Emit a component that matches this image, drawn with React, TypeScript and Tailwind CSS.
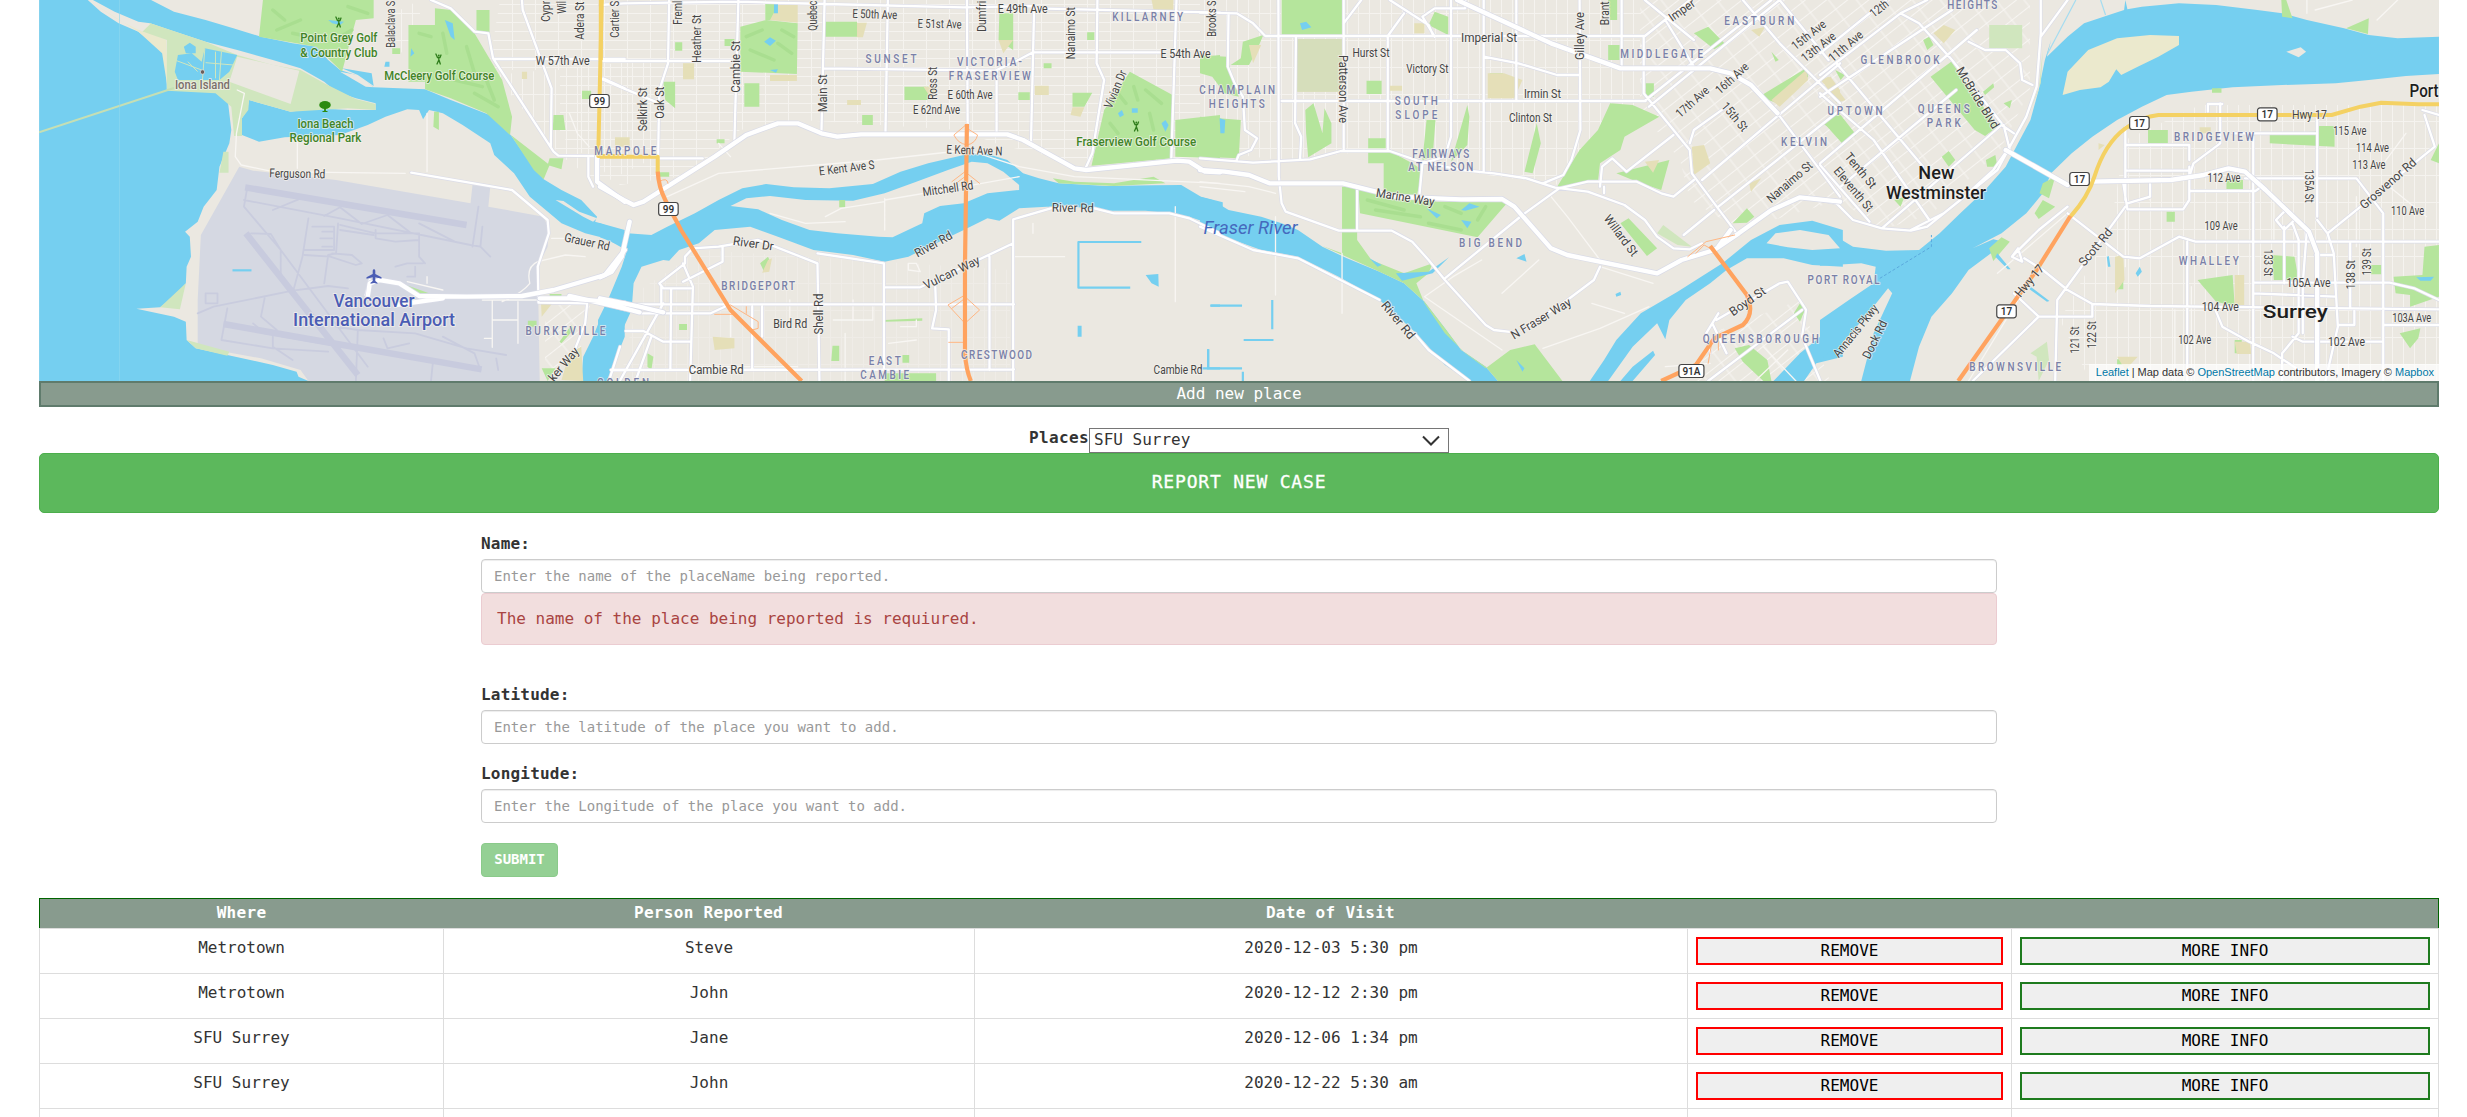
import React from "react";

type Tile = 0 | 1 | 2 | 3;
/* Each map tile has its own origin and horizontal scale; vertical scale is 1/3 everywhere. */
const TILES: [number, number][] = [
  [0, 0.3954],
  [600, 0.3954],
  [1200, 0.40816],
  [1820, 0.41263],
];
const tf = (t: number) => `translate(${TILES[t][0]} 0) scale(${TILES[t][1]} 0.33333)`;

type Shape = [Tile, string];

const WATER: Shape[] = [
  [0, "M99 0H222L255 35 300 70 350 95 400 140 420 175 422 272 470 268 550 272 575 290 585 390 580 430 555 500 548 570 515 620 500 665 468 695 480 710 483 770 472 800 470 850 440 890 405 922 345 926 440 950 470 965 472 1020 495 1045 575 1065 690 1095 750 1115 755 1130 780 1143H99Z"],
  [0, "M382 0L440 35 520 60 590 85 660 110 740 130 800 140 830 180 860 210 900 225 945 262 1075 268 1140 300 1250 350 1295 410 1330 470 1375 538 1420 570 1470 600 1510 650 1505 665 1580 690V748L1530 715 1480 700 1420 670 1390 640 1340 590 1300 520 1250 465 1240 430 1170 375 1120 340 1085 330 1070 358 1060 330 1030 328 975 350 930 375 860 405 720 412 655 425 612 405V355L625 330 630 300 690 320 735 335 800 325 880 330 950 330V310L900 295 850 275 820 245 760 205 690 180 600 150 520 125 430 90 380 70 350 65 290 35 235 0Z"],
  [0, "M1580 800L1530 920 1500 1010 1475 1070 1470 1143H1535L1580 1010Z"],
  [1, "M0 670L70 700 130 705 170 680 240 640 300 600 360 565 420 552 490 562 580 565 690 552 760 515 830 490 920 465 980 462 1030 480 1070 520 1110 535 1160 550 1280 558 1400 556 1470 555 1520 590 1575 607V684L1490 650 1440 640 1380 632 1280 632 1200 620 1130 620 1060 625 1010 662 980 655 920 690 850 730 780 770 720 785 640 765 540 750 450 710 380 680 290 690 250 730 200 750 175 782 160 780 105 800 85 850 80 930 45 1020 15 1143H-5V960L20 900 55 800 70 745 0 712Z"],
  [2, "M0 590L30 600 70 630 150 650 200 670 240 690 300 740 360 775 440 815 500 850 550 905 600 985 640 1050 700 1100 730 1143H660L600 1095 530 1000 440 900 340 830 240 770 150 750 70 715 0 670Z"],
  [2, "M955 1143L990 1080 1020 1020 1080 940 1170 875 1280 790 1350 720 1420 675 1500 662 1575 690V800L1500 795 1430 775 1340 775 1290 810 1250 850 1190 900 1150 960 1140 1018 1120 970 1060 1040 1000 1143ZM1030 1143L1060 1100 1110 1052 1115 1065 1060 1143ZM1405 1143L1470 1060 1540 990 1575 965V1070L1510 1090 1480 1143Z"],
  [3, "M0 675L40 710 80 740 160 752 240 750 290 700 340 640 400 570 450 500 480 430 510 360 530 270 545 180 560 120 550 170 600 110 640 70 700 45 737 30 740 0 745 28 780 20 870 10 960 15 1060 30 1120 40 1180 60 1270 85 1330 105 1400 115 1500 110V222L1420 228 1330 240 1250 250 1120 255 1000 262 900 275 840 285 780 320 720 360 660 410 610 460 560 520 540 580 500 640 440 700 370 745 420 718 435 722 425 750 360 810 320 880 270 950 240 1040 218 1143H100L130 1000 175 880 165 865 110 950 60 1020 0 1080V960L70 900 130 850 135 800 100 790 0 797Z"],
];
const ISLANDS: Shape[] = [
  [1, "M330 618L370 595 430 588 520 600 640 602 720 580 800 545 880 510 940 485 980 490 1020 515 1060 555 1060 570 980 580 920 610 860 618 820 640 815 670 740 712 705 710 600 700 530 690 460 660 400 628Z"],
  [2, "M1388 730L1410 700 1470 690 1540 705 1568 745 1500 750 1440 742Z"],
  [0, "M1405 600L1425 603 1465 635 1510 655 1500 665 1475 650Z"],
  [0, "M860 215L905 225 945 262 925 260Z"],
  [3, "M1130 155L1165 142 1178 155 1160 172Z"],
];
const SAND: Shape[] = [
  [3, "M588 285L600 215 650 150 720 115 800 105 870 108 870 135 820 170 770 200 730 225 718 208 700 245 680 262 630 270Z"],
  [0, "M222 0L300 60 420 120 425 272 410 160 350 95Z"],
];
const PALE_GREEN: Shape[] = [
  [0, "M350 90L380 70 520 125 600 165 690 195 760 210 820 250 900 297 950 312V330L880 325 735 335 630 300 628 330 612 355V408H592L585 320 545 280 422 272V120Z"],
  [0, "M565 455H578V518H555ZM470 850L455 928 405 922ZM472 1020L580 1055 575 1067 495 1045Z"],
  [2, "M1135 675L1205 740 1170 735 1120 700Z"],
  [3, "M410 75H490V145H410ZM510 1060L550 1025 555 1080 530 1143 525 1070ZM530 270L540 150 535 250 480 420Z"],
];
const GREEN: Shape[] = [
  [0, "M665 0H945V55L900 60 865 215 800 140 655 110ZM1100 25L1140 30 1200 100 1270 240 1295 350 1290 405 1230 340 1140 295 1075 268V245H1033V75H1100ZM1205 30H1238V100H1205ZM1292 405L1390 495 1375 538 1350 510ZM1400 345H1425L1430 390H1398ZM1390 475L1425 475 1420 508 1385 495ZM1098 335H1110V390L1096 380ZM1472 272H1495V297H1472ZM1390 882H1420V903H1390ZM1335 962H1357V980H1335ZM1415 1025L1445 975 1450 990 1420 1030ZM1370 1105H1405L1385 1143ZM1015 850L1085 880 1050 880ZM992 145H1012V162H992Z"],
  [1, "M355 80L420 60 500 70 498 222 355 215ZM570 65H650V110H570ZM365 250H403V320H365ZM160 245H190V325L165 300ZM1010 40H1045V150L1008 120ZM1340 215L1448 285 1445 475 1243 497 1275 330ZM1455 360L1568 345V475L1455 470ZM770 260H830V300H770ZM1195 278H1245L1225 320H1195ZM663 345H690V375H663ZM1058 277H1087V300H1058ZM315 117H340V138H315ZM295 418H315V430H295ZM150 517H175V530H150ZM720 960L815 955V962L720 965ZM588 1037H605V1083H585ZM720 1120H850V1143H720ZM765 1065H782V1088H765ZM1525 170L1568 165V225L1520 215ZM1145 535L1200 545 1300 550 1400 530 1430 550 1300 558 1160 550ZM418 10H450V60H418ZM120 1060L135 1070 130 1110 120 1100ZM405 790L425 770 432 790 415 815ZM605 600H620V622H605ZM200 972H220V990H200ZM190 127H208V152H190ZM1232 97H1250V120H1232ZM1122 190H1142V205H1122Z"],
  [2, "M200 0H348V107H200ZM0 350L100 360 95 475 0 470ZM0 165L65 170 95 290 60 280 30 230 0 220ZM105 125L155 105 140 150 120 195 75 195 100 175ZM408 242H445V282H408ZM258 330L278 310 300 400 305 325 322 370 322 430 265 472 260 400ZM555 360H577L570 470 545 480ZM615 485L655 315 660 350 655 435ZM795 515L825 370 835 430 815 520ZM412 415H455V445H412ZM412 450H460L520 490 545 510 530 595 450 575V490H412ZM388 570L440 575 580 605 755 605 680 712 392 640ZM348 560H385V720L420 780 500 820 570 790 560 820 530 850 550 910 600 1000 650 1060 700 1105 760 1050 820 1033 888 1143H730L700 1100 640 1050 600 985 550 905 500 850 440 815 300 738 348 760ZM875 560L930 450 975 390 1005 310 1060 315 1125 350 1040 410 1030 450 980 490 975 545ZM1020 520L1150 480 1130 570 1070 545ZM1030 670L1050 655 1120 745 1095 768ZM1305 670L1340 625 1358 650 1340 668ZM1210 100L1245 80 1285 130 1260 148ZM1310 1045L1345 1035 1390 1080 1400 1143H1380L1330 1085ZM1525 370L1568 330V405ZM560 75L575 35 608 50V105ZM1000 135H1028V180H1000ZM1092 250H1112V290H1092ZM1000 0H1022V60H1005ZM1370 290L1485 205 1490 230 1415 310ZM1470 910L1482 930 1470 965 1455 940ZM1400 155L1418 180 1410 185ZM710 220H742V240H710Z"],
  [3, "M268 230L318 185 430 380 400 408 375 390ZM10 370L50 345 88 405 55 432ZM410 745L440 712 460 725 420 783ZM520 640L540 600 570 620 530 657ZM540 550L570 530 555 595 532 580ZM795 390H843V430H795ZM1090 400L1200 395 1210 378H1247V440L1090 430ZM915 840L1000 825 1005 918 960 905ZM1095 765L1150 770 1160 840 1100 840ZM1390 830L1460 825 1465 740 1500 735V890L1430 920V885L1395 880ZM1118 0H1130L1145 55 1120 50ZM1275 85L1330 55 1328 102ZM295 470L312 453 328 480 312 500ZM402 480L425 465 430 500 405 500ZM1405 1000L1455 985 1450 1015 1430 1045ZM840 635H860V665H840ZM1480 480L1500 430V490ZM985 540H1025V567H985ZM250 120L265 110 275 135 260 150ZM395 275L420 250 422 262 400 285ZM720 1078H745V1095H720ZM37 210L60 225 50 240ZM445 310L465 300 460 325ZM720 840H735V868H718ZM1335 795H1360V823H1335ZM1005 1020H1022V1060H1005ZM180 600L205 590 195 620ZM950 265H973V278H950Z"],
];
const BEIGE: Shape[] = [
  [1, "M450 15H500V68L430 60ZM650 68H675L665 112H650ZM430 225H498V243H430ZM1008 120H1045L1020 160ZM1100 257H1135V285H1100ZM210 190H238V238H210ZM285 1010L340 1015V1045L290 1050ZM1195 322H1225L1215 350 1190 345ZM1395 0H1450V30H1400ZM38 412H75V440H38ZM818 260H850L840 300ZM625 300H660V315H625ZM425 780L435 775 428 815 410 818Z"],
  [2, "M238 117H348V275H238ZM705 220H745L790 240 770 295H705ZM1205 440L1235 435 1250 490 1210 525ZM1400 300L1485 210 1490 240 1420 320ZM1520 240L1545 230 1568 270V300ZM465 257H495V272H465ZM120 135H150L130 190ZM1090 485L1125 480 1110 518ZM1345 550L1375 535 1350 575ZM1350 90L1385 80 1370 110ZM525 70H550V100H525Z"],
  [3, "M275 100L300 75 328 90 300 130ZM5 240L20 230 62 300 40 310ZM715 770L735 765 738 840 715 880ZM1005 825H1028V915H1005ZM1005 1025H1042L1045 1062H1010ZM720 1070L770 1070 740 1110ZM920 382H947V400H920ZM675 430L690 435 675 450Z"],
  [0, "M1440 1060L1470 1040 1475 1143 1420 1140ZM1368 905L1400 905 1370 950ZM1320 215H1333V237H1320Z"],
];
const PONDS: Shape[] = [
  [0, "M450 165L485 160 510 185 518 145 600 165 580 215 555 240H450L442 215ZM465 140L480 128 495 140 495 160H470ZM1125 60L1145 70 1150 120 1140 110ZM1040 145L1048 160 1038 170ZM975 185H985V200H972ZM830 60L870 65 860 75 840 70ZM865 205L940 220 945 258 905 225Z"],
  [1, "M415 125L430 112 445 122 430 138ZM430 210L450 208 445 218ZM1420 370L1430 360 1438 375 1430 395ZM1310 340L1320 330 1325 345 1315 352ZM1345 325H1360V338H1345ZM1380 825L1412 822 1413 860 1395 850ZM1208 977H1218V1010H1208ZM440 10H450V40H440Z"],
  [2, "M48 355L62 360 60 400 50 400ZM245 70L260 65 273 82 250 90ZM555 625L590 645 580 655ZM640 630L660 610 685 620 650 632ZM640 660L665 665 655 685ZM775 775L795 762 800 785ZM1018 882L1030 875 1032 885 1020 890ZM775 1080L795 1105 790 1115ZM480 820L560 815 610 772 570 820 495 842ZM415 775L445 795 435 800Z"],
  [3, "M695 770L700 768 704 800 698 800ZM765 820L775 800 780 815 770 830ZM430 760L462 808 455 808 425 770ZM510 860L556 903 550 905 508 868ZM1445 832L1488 830 1480 842 1455 842Z"],
];
const CANALS: Shape[] = [
  [1, "M1369 726H1210V863H1341M1545 917H1568M1538 1048V1105M1568 1105H1535"],
  [2, "M25 917H103M177 900V988M107 1020H180M20 1048V1105M0 1105H103M105 1115V1143"],
  [0, "M588 811H636"],
];
const RUNWAY_WIDE: Shape[] = [[0, "M620 562L1180 675M622 700L905 1125M565 972L1218 1108"]];
const RUNWAY: Shape[] = [
  [0, "M625 565L617 620 710 750 930 1100M617 600L860 655 1190 735 1215 740 1240 770M690 630L755 598M820 648L860 622 915 672 980 645 1040 700M635 700L685 702 710 750V840M780 655L765 770 740 880M855 670L850 760 830 765 820 850M770 765L835 770 900 795 915 790 890 765 840 760M860 675L950 700H1060V770L1075 790M860 690L945 705M1210 620L1195 740M1220 680L1215 740M500 940L540 920 740 872 830 858 880 865M520 880H550V910H520ZM575 925L560 1020 690 1045 830 1055M640 970L670 1000 860 1040M690 1000V1040L740 1080M905 990L900 1143M850 980L905 990 1050 1000 1180 1045 1280 1065M1050 800V830H1030M1000 800L1030 790H1070M1095 1085L1090 1143M1120 1010L1200 1060 1215 1110M970 1015L980 1045 1035 1030M1255 1075L1260 1110M670 890L660 950 700 990M950 690V715L1000 725 1060 720M790 680H845V750H770M815 695H845M810 715H840M815 740H840M1060 670L1150 725"],
];

const MINOR: Shape[] = [
  [0, "M600 270L618 280 598 400 595 470 610 495 690 515 1025 520M752 418V505M1080 340V515M1365 900H1220M1245 960H1310M1310 905V1030M1245 900V1042M1225 1015H1245M1030 845L1120 870M1080 830V850M1360 785Q1330 800 1340 850Q1320 880 1270 905M1360 785L1430 765 1480 770M1395 715H1430M1490 440L1460 400 1440 340"],
  [1, "M170 590L300 520 700 480 930 450 1060 500 1200 530 1568 550M330 470L300 430M720 595V690M720 600L920 560 1060 530M570 650L610 625 720 605M430 640L520 670 620 665M1050 770H1175M1095 670V700M780 790L800 790 810 815 780 810ZM640 900V960M590 960H690V920M760 980H800V960M730 1030L800 1020M620 1000V1143M1455 905V620M480 900V980M330 930V1010M250 1100H500"],
  [2, "M185 650V885M348 760V940M0 545L120 560 185 580M0 560L110 575M550 890L620 830 690 780M550 890L740 1050M840 1045L980 985 1100 920M980 800L1110 850M860 590L900 650 980 780M740 880L830 780M960 910L1040 940M1140 1100L1250 1090M1380 1040L1460 1143M1360 1143L1440 1050"],
  [3, "M600 640L430 820M480 900L360 1143M740 625V800M800 560V600M900 860V1143M860 930V1143M1300 590V740M1100 600V720M1420 400L1360 500M1380 560L1470 650M1400 0L1350 60M1180 0V40M1290 0L1200 30"],
];
const ROADS: Shape[] = [
  [0, "M1320 0L1322 30 1395 265 1393 440M1090 0L1140 25 1200 95 1235 100 1247 175 1400 455 1412 467 1510 468M1250 177H1580M1488 470V530L1500 560M1525 235L1580 265M1040 518L1295 570 1385 660 1388 700 1360 800 1362 908 1485 910 1480 970 1450 1060M925 885L935 840M1568 1040L1540 1143M1545 1110H1580"],
  [1, "M0 15L60 10 350 5 570 12 920 22 1100 18M1100 25L1568 38M0 183H345M0 235L150 310M175 0L172 190 150 270 147 470M350 0L340 420M568 0L560 400M728 0L722 395M928 0L930 400M565 205L1000 212 1050 185 1095 157H1420M1098 20L1090 430M1003 210V400M1258 0L1256 190 1275 240 1245 460 1228 505M1458 0L1445 475M150 475H260M215 770L235 745 300 740 400 720 550 790 555 1143M550 760L718 790M310 740V785L210 845M215 770V790L150 850 160 865H230M155 860V915M180 865L178 1105M210 790L235 860 228 1143M0 913H1047M100 940H280L325 915M1045 1143V658L1140 625 1200 620M1250 625L1300 640 1440 640 1490 655 1568 700M718 790V1110M718 862H810L1045 730M985 770V1110M30 1110L1047 1108M848 860L850 930 840 985 882 988V1143M160 910L50 1143M65 993H110L160 1025H230M130 1010L90 1143M385 920V1110M410 920V1010"],
  [2, "M0 38L90 40 130 70 160 108H1090L1200 0M70 40L68 200 85 250 105 290 110 390 140 415 125 450 95 465 90 480M192 0L193 530 200 610 210 635 340 692H470L520 725 560 780 600 840 700 975 720 990 770 997M235 110L233 370 248 410 245 478M352 0V450M395 0L352 70M460 108V450M460 108L500 40M615 0V410L600 470 545 490 538 580M695 0V515M775 0V300M930 0L932 390 910 480 890 525 840 550M465 0L560 75 572 108M575 110L545 50 575 25H650V0M1033 0V200M200 303H1092M695 170L780 190 875 225H930M0 475L130 488 270 478 345 453H465L540 485 640 510 720 520 800 535 870 563 950 575 1040 615 1090 660 1120 710 1160 745 1200 748 1230 730M1087 108V280L1200 450 1205 520 1315 700M1092 300L1400 0M1140 60L1210 200M1090 0L1210 120M1100 320L1360 60 1420 0M980 560L985 500 1010 475 1045 515 1160 405M990 580V560M1230 540L1568 190M1200 430L1210 390 1290 320M1330 0L1420 130 1510 240 1568 310M1270 620L1568 330M1210 540L1160 590 1130 580 1070 545H950L880 565 790 645 600 835M385 570V692M0 680L130 750 240 775 440 900M525 1000L560 1050 660 1143M790 990L900 900 965 840 980 800M1265 960L1420 850 1440 845 1485 930 1475 1010 1520 1143M1245 1143L1475 930M1255 970L1290 1060M1250 1060L1240 1000 1270 940M1185 705L1260 630M1415 340L1568 590M1420 0L1540 180"],
  [3, "M0 225L195 40 260 0M0 160L160 0M0 290L320 30M0 490L380 90M50 560L330 270M195 40L240 70 320 180 440 370M40 190L250 500M0 280L130 420 265 660M320 180L270 110M360 125L400 150H450L485 190 490 240 515 255M535 0V100L525 260 500 350 460 440 430 510 300 640 220 690M600 0L535 110M150 685L440 375 470 400M0 600L40 610 80 660 150 685 220 692 260 680 340 600 420 510 460 440M460 450L445 375M0 495L120 665M740 380V600M740 435H895V480M740 512H895M895 500V600L880 628 745 628 735 550M745 610L800 590V545M970 310V430L905 490 895 530M940 335V312H975M1000 400H1205V355M1050 410V1143M895 573H1055L1070 560M1030 535H1300L1365 640V1143M600 640L735 770 775 775 870 710 910 725H1500M890 725V1143M740 620L575 900 570 1143M465 770L480 745 490 785 465 770L530 690 600 620M495 775L540 810 600 870 660 912 800 918 1500 928M660 912V950H530L470 880M530 950L370 1143M955 920L975 980 1040 1025 1100 1060 1160 1110M1050 848H1380L1440 865 1500 900M1050 880 1250 890M1205 660L1230 700 1245 760 1255 980 1225 1143M1205 650V400M1125 680V850M1125 635L1105 660 1125 690 1150 660M1145 670L1160 720V1000L1120 1060V1143M1180 690L1170 850V1000M1200 765H1245M1230 700L1490 440 1465 345M1145 1010 1170 1025H1365M1285 730V925M1295 930V975H1255M1365 975H1500M1460 330L1500 345"],
];
const MAJOR: Shape[] = [
  [0, "M960 840L1010 850 1060 888 1180 890 1320 888 1400 870 1530 825 1580 750M1000 915L1120 895M930 890L935 850 960 840M1365 895H1440L1580 910M1440 888L1580 925M1510 470V545L1580 605"],
  [1, "M0 560L60 600 85 615 110 605 290 470 370 405 450 370 500 370 560 400 600 410 660 403 1030 403 1070 420 1200 505 1230 510 1460 482 1490 485 1530 515 1568 517M75 665L55 770 30 815 0 832M0 895L100 920 160 937M0 905L100 937"],
  [2, "M0 510L60 515 120 525 170 550H350L480 590 640 598 740 597 770 620 860 745 900 765 1120 820 1180 780 1260 750 1320 700 1400 630 1470 592 1568 605M630 0L860 130 1030 205H1250L1300 220 1350 255 1415 340M1300 690L1270 740"],
  [3, "M450 450L600 555M655 545L850 540 930 525 990 505 1030 515 1080 570 1185 695 1205 760V1143"],
];
const YELLOW: Shape[] = [
  [0, "M1522 0L1513 468H1580"],
  [1, "M2 0V180M0 470H146V517"],
  [3, "M1500 313H1450L1360 308 1310 320 1240 345H820Q780 350 740 385Q690 430 665 530Q650 590 607 650"],
];
const ORANGE: Shape[] = [
  [1, "M146 515Q148 560 165 600L205 690 330 930 510 1143M928 372L923 800V1060Q926 1110 938 1143"],
  [2, "M1250 738L1340 885Q1360 940 1330 975L1260 1015 1215 1095 1130 1143"],
  [3, "M607 648L525 810 335 1143"],
];
const RAMPS: Shape[] = [
  [1, "M928 372L895 405Q905 430 928 435Q950 430 955 405L928 385M923 515L890 545M923 515L960 550M923 530L895 555M923 885L880 915 923 970 960 930 923 890M890 925L923 895M330 915L400 965V985L385 990M370 920V940M290 943H340M882 1027H920M150 545Q170 530 172 550"],
  [2, "M1195 770L1240 725 1310 705M1215 760L1235 735 1250 745M1255 1020L1245 1090M1270 1000V1050"],
];

type Kind = "s" | "d" | "g" | "a" | "c" | "r" | "p";
/* tile, text, centre x, centre y, length in px, rotation, kind */
type Label = [Tile, string, number, number, number, number, Kind];
const LABELS: Label[] = [
  [0, "Point Grey Golf", 857, 112, 77, 0, "g"],
  [0, "& Country Club", 857, 156, 77, 0, "g"],
  [0, "McCleery Golf Course", 1111, 225, 110, 0, "g"],
  [0, "Iona Island", 512, 252, 55, 0, "p"],
  [0, "Iona Beach", 823, 370, 56, 0, "g"],
  [0, "Regional Park", 823, 413, 72, 0, "g"],
  [0, "Ferguson Rd", 752, 520, 56, 1, "s"],
  [0, "Vancouver", 946, 900, 81, 0, "a"],
  [0, "International Airport", 946, 959, 162, 0, "a"],
  [0, "BURKEVILLE", 1430, 992, 80, 0, "d"],
  [0, "Balaclava S", 988, 73, 47, -90, "s"],
  [0, "Cypr", 1380, 34, 21, -90, "s"],
  [0, "Wil", 1420, 22, 13, -90, "s"],
  [0, "Adera St", 1466, 62, 38, -90, "s"],
  [0, "W 57th Ave", 1423, 181, 54, 0, "s"],
  [0, "Grauer Rd", 1485, 725, 46, 12, "s"],
  [0, "ker Way", 1425, 1092, 40, -50, "s"],
  [1, "Cartier S", 38, 58, 37, -90, "s"],
  [1, "Freml", 197, 38, 24, -90, "s"],
  [1, "Heather St", 243, 116, 48, -90, "s"],
  [1, "Cambie St", 343, 200, 52, -90, "s"],
  [1, "Selkirk St", 108, 328, 44, -90, "s"],
  [1, "Oak St", 151, 308, 32, -90, "s"],
  [1, "Quebec", 537, 47, 30, -90, "s"],
  [1, "Main St", 563, 280, 38, -90, "s"],
  [1, "Dumfri", 965, 49, 31, -90, "s"],
  [1, "Ross St", 841, 250, 33, -90, "s"],
  [1, "Nanaimo St", 1191, 100, 52, -90, "s"],
  [1, "Vivian Dr", 1303, 267, 40, -67, "s"],
  [1, "Brooks S", 1547, 56, 36, -90, "s"],
  [1, "E 50th Ave", 695, 42, 45, 2, "s"],
  [1, "E 51st Ave", 859, 71, 44, 1, "s"],
  [1, "E 49th Ave", 1069, 26, 50, 0, "s"],
  [1, "E 54th Ave", 1481, 160, 50, 0, "s"],
  [1, "E 60th Ave", 936, 285, 45, 0, "s"],
  [1, "E 62nd Ave", 851, 330, 47, 0, "s"],
  [1, "SUNSET", 736, 175, 51, 0, "d"],
  [1, "VICTORIA-", 985, 186, 65, 0, "d"],
  [1, "FRASERVIEW", 986, 228, 82, 0, "d"],
  [1, "KILLARNEY", 1385, 50, 71, 0, "d"],
  [1, "MARPOLE", 64, 452, 62, 0, "d"],
  [1, "BRIDGEPORT", 400, 856, 74, 0, "d"],
  [1, "CRESTWOOD", 1003, 1063, 71, 0, "d"],
  [1, "EAST", 720, 1083, 32, 0, "d"],
  [1, "CAMBIE", 720, 1124, 49, 0, "d"],
  [1, "GOLDEN", 58, 1147, 52, 0, "d"],
  [1, "Fraserview Golf Course", 1356, 425, 120, 0, "g"],
  [1, "E Kent Ave S", 624, 503, 56, -7, "s"],
  [1, "E Kent Ave N", 947, 450, 56, 2, "s"],
  [1, "Mitchell Rd", 880, 565, 51, -8, "s"],
  [1, "River Dr", 388, 730, 41, 8, "s"],
  [1, "River Rd", 843, 732, 41, -29, "s"],
  [1, "River Rd", 1196, 623, 42, 1, "s"],
  [1, "Vulcan Way", 889, 817, 61, -26, "s"],
  [1, "Bird Rd", 481, 970, 34, 0, "s"],
  [1, "Shell Rd", 553, 942, 41, -90, "s"],
  [1, "Cambie Rd", 294, 1109, 55, 0, "s"],
  [1, "Cambie Rd", 1462, 1110, 49, 0, "s"],
  [2, "Fraser River", 124, 681, 94, 0, "r"],
  [2, "CHAMPLAIN", 91, 270, 76, 0, "d"],
  [2, "HEIGHTS", 90, 311, 56, 0, "d"],
  [2, "SOUTH", 530, 303, 43, 0, "d"],
  [2, "SLOPE", 530, 345, 42, 0, "d"],
  [2, "FAIRWAYS", 590, 460, 57, 0, "d"],
  [2, "AT NELSON", 590, 499, 65, 0, "d"],
  [2, "MIDDLEGATE", 1131, 162, 83, 0, "d"],
  [2, "EASTBURN", 1370, 61, 70, 0, "d"],
  [2, "KELVIN", 1480, 424, 46, 0, "d"],
  [2, "BIG BEND", 712, 729, 63, 0, "d"],
  [2, "QUEENSBOROUGH", 1374, 1017, 116, 0, "d"],
  [2, "Imperial St", 708, 112, 56, 0, "s"],
  [2, "Hurst St", 419, 157, 37, 0, "s"],
  [2, "Victory St", 557, 206, 42, 0, "s"],
  [2, "Irmin St", 839, 280, 37, 0, "s"],
  [2, "Clinton St", 810, 353, 43, 0, "s"],
  [2, "Patterson Ave", 352, 267, 68, 90, "s"],
  [2, "Gilley Ave", 930, 108, 48, -90, "s"],
  [2, "Brant", 991, 40, 24, -90, "s"],
  [2, "Imper", 1180, 30, 29, -35, "s"],
  [2, "17th Ave", 1206, 305, 40, -42, "s"],
  [2, "16th Ave", 1303, 234, 40, -42, "s"],
  [2, "15th Ave", 1491, 104, 40, -38, "s"],
  [2, "13th Ave", 1515, 140, 40, -38, "s"],
  [2, "15th St", 1311, 350, 34, 50, "s"],
  [2, "Nanaimo St", 1444, 545, 56, -41, "s"],
  [2, "Willard St", 1032, 706, 48, 53, "s"],
  [2, "Marine Way", 503, 591, 59, 9, "s"],
  [2, "River Rd", 486, 960, 45, 50, "s"],
  [2, "N Fraser Way", 835, 955, 68, -31, "s"],
  [2, "Boyd St", 1341, 903, 41, -35, "s"],
  [3, "HEIGHTS", 369, 15, 50, 0, "d"],
  [3, "GLENBROOK", 194, 180, 79, 0, "d"],
  [3, "UPTOWN", 85, 332, 55, 0, "d"],
  [3, "QUEENS", 300, 327, 52, 0, "d"],
  [3, "PARK", 300, 368, 34, 0, "d"],
  [3, "PORT ROYAL", 57, 840, 72, 0, "d"],
  [3, "BRIDGEVIEW", 955, 411, 80, 0, "d"],
  [3, "WHALLEY", 942, 783, 60, 0, "d"],
  [3, "BROWNSVILLE", 473, 1101, 92, 0, "d"],
  [3, "12th", 143, 25, 20, -38, "s"],
  [3, "11th Ave", 62, 138, 41, -40, "s"],
  [3, "McBride Blvd", 383, 293, 70, 58, "s"],
  [3, "Tenth St", 99, 511, 42, 50, "s"],
  [3, "Eleventh St", 82, 567, 54, 50, "s"],
  [3, "New", 282, 516, 36, 0, "c"],
  [3, "Westminster", 281, 577, 100, 0, "c"],
  [3, "Surrey", 1152, 932, 65, 0, "c"],
  [3, "Port", 1464, 269, 29, 0, "c"],
  [3, "Hwy 17", 1186, 345, 35, 0, "s"],
  [3, "Hwy 17", 507, 842, 38, -50, "s"],
  [3, "Scott Rd", 667, 741, 45, -50, "s"],
  [3, "Annacis Pkwy", 86, 992, 64, -51, "s"],
  [3, "Dock Rd", 132, 1018, 41, -64, "s"],
  [3, "112 Ave", 979, 532, 33, 0, "s"],
  [3, "115 Ave", 1284, 392, 33, 0, "s"],
  [3, "114 Ave", 1339, 443, 33, 0, "s"],
  [3, "113 Ave", 1330, 494, 33, 0, "s"],
  [3, "110 Ave", 1424, 633, 33, 0, "s"],
  [3, "109 Ave", 972, 676, 33, 0, "s"],
  [3, "105A Ave", 1184, 849, 44, 0, "s"],
  [3, "104 Ave", 970, 921, 37, 0, "s"],
  [3, "103A Ave", 1434, 953, 39, 0, "s"],
  [3, "102 Ave", 908, 1018, 33, 0, "s"],
  [3, "102 Ave", 1276, 1026, 37, 0, "s"],
  [3, "Grosvenor Rd", 1376, 550, 70, -41, "s"],
  [3, "135A St", 1186, 558, 33, 90, "s"],
  [3, "133 St", 1086, 788, 27, 90, "s"],
  [3, "138 St", 1286, 824, 29, -90, "s"],
  [3, "139 St", 1324, 785, 27, -90, "s"],
  [3, "121 St", 617, 1020, 27, -90, "s"],
  [3, "122 St", 659, 1004, 27, -90, "s"],
];
/* squeeze narrows the glyphs; the text length stays the one given by the label */
const KIND: Record<Kind, { size: number; fill: string; weight: number; squeeze: number; italic?: boolean }> = {
  s: { size: 12.3, fill: "#444444", weight: 400, squeeze: 1 },
  d: { size: 12.4, fill: "#7980a8", weight: 500, squeeze: 0.8 },
  g: { size: 12.8, fill: "#3f8427", weight: 500, squeeze: 1 },
  a: { size: 18.5, fill: "#4a5cb4", weight: 500, squeeze: 1 },
  c: { size: 19, fill: "#1e1e1e", weight: 500, squeeze: 1 },
  r: { size: 19, fill: "#4569bd", weight: 400, squeeze: 1, italic: true },
  p: { size: 12.5, fill: "#7a6e6a", weight: 500, squeeze: 1 },
};
const SHIELDS: [Tile, number, number, string][] = [
  [0, 1516, 303, "99"],
  [1, 173, 627, "99"],
  [2, 1204, 1113, "91A"],
  [3, 774, 369, "17"],
  [3, 1084, 343, "17"],
  [3, 629, 537, "17"],
  [3, 452, 934, "17"],
];

const px = (t: Tile, x: number) => TILES[t][0] + x * TILES[t][1];

function Fill({ items, fill }: { items: Shape[]; fill: string }) {
  return (
    <>
      {items.map(([t, d], i) => (
        <path key={i} d={d} fill={fill} transform={tf(t)} />
      ))}
    </>
  );
}
function Line({ items, color, w, cap = "round" }: { items: Shape[]; color: string; w: number; cap?: "round" | "butt" }) {
  return (
    <>
      {items.map(([t, d], i) => (
        <path key={i} d={d} fill="none" stroke={color} strokeWidth={w} strokeLinecap={cap} strokeLinejoin="round" vectorEffect="non-scaling-stroke" transform={tf(t)} />
      ))}
    </>
  );
}

function StreetMap() {
  return (
    <svg className="block h-[381px] w-[2400px]" viewBox="39 0 2400 381" fontFamily="Roboto, 'Liberation Sans', sans-serif">
      <defs>
        <pattern id="blocks" width="23" height="9" patternUnits="userSpaceOnUse">
          <path d="M0 4.5H23M6.500 0V9" stroke="#f5f3ef" strokeWidth="1" fill="none" />
        </pattern>
        <pattern id="blocksTall" width="11" height="27" patternUnits="userSpaceOnUse">
          <path d="M5.500 0V27M0 13.500H11" stroke="#f5f3ef" strokeWidth="1" fill="none" />
        </pattern>
        <pattern id="blocksTilt" width="13" height="22" patternUnits="userSpaceOnUse" patternTransform="rotate(52)">
          <path d="M6.500 0V22M0 11H13" stroke="#f7f5f2" strokeWidth="1" fill="none" />
        </pattern>
      </defs>
      <rect x="39" width="2400" height="381" fill="#ebe8e1" />
      <path d="M380 0H500L490 60 495 70H560V135L620 185 690 175 740 130 800 120 960 130 1000 145 1090 165 1200 160V0Z" fill="url(#blocks)" />
      <path d="M495 75L560 155 600 185 650 160V60ZM380 20L420 80V0Z" fill="url(#blocksTall)" />
      <path d="M1200 0H1640V100L1560 185 1450 170 1380 150 1280 160 1200 150Z" fill="url(#blocksTall)" />
      <path d="M1640 0H2030V90L2000 150 1930 215 1880 230 1840 200 1740 230 1690 200 1680 160 1640 110Z" fill="url(#blocksTilt)" />
      <path d="M2125 140L2200 105H2439V381H2090L2060 320 2110 230Z" fill="url(#blocksTall)" />
      <path d="M640 290L700 250 1010 270V381H620Z" fill="url(#blocksTall)" opacity="0.4" />
      <path d="M545 305H590L580 350 545 381Z" fill="url(#blocksTilt)" />
      <path d="M1690 381L1720 330 1800 300 1830 381Z" fill="url(#blocksTilt)" />

      <path transform={tf(0)} d="M605 500L640 512 850 540 1190 610 1195 555 1240 560 1235 620 1375 650 1388 690 1385 740 1360 800 1365 1143H780L760 1110 660 1075 500 1040V900L508 705Z" fill="#d5d8e2" />
      <Line items={RUNWAY} color="#c9ccde" w={1.8} />
      <Line items={RUNWAY_WIDE} color="#c8cbde" w={6.5} cap="butt" />

      <Fill items={WATER} fill="#75cff0" />
      <Fill items={ISLANDS} fill="#ebe8e1" />
      <Fill items={SAND} fill="#ebe9cd" />
      <Fill items={PALE_GREEN} fill="#d0e6be" />
      <path transform={tf(0)} d="M600 170L757 212 735 312 580 245ZM300 60L380 72 360 95Z" fill="#ebe8e1" />
      <Fill items={GREEN} fill="#b5e59c" />
      <Fill items={BEIGE} fill="#e5dfb8" />
      <path transform={tf(2)} d="M238 117H348V275H238Z" fill="#d6debb" />
      <Line
        items={[
          [0, "M690 30L720 60M700 90L760 60M740 100L800 115M880 20L930 40M1120 100L1130 160M1180 140L1200 220M1150 240L1220 260M1200 280L1260 320M1060 100L1090 110M1230 240L1250 300M860 110L890 90"],
          [1, "M370 110L410 90M380 150L440 180M450 130L485 160M460 90L490 110M1310 280L1330 310M1380 270L1420 310M1290 370L1310 400M1350 260L1360 300M1390 340L1400 390"],
          [2, "M410 600L500 630M430 630L540 650M560 670L640 690M600 620L640 640M700 620L680 660"],
        ]}
        color="#a9de90"
        w={3.5}
      />
      <Fill items={PONDS} fill="#75cff0" />
      <Line items={CANALS} color="#75cff0" w={2.2} cap="butt" />
      <path transform={tf(0)} d="M442 180L510 210M518 145L512 240M545 155V235M560 155L555 240M520 188L590 195M475 185L500 215" stroke="#d0e6be" strokeWidth="1" vectorEffect="non-scaling-stroke" fill="none" />
      <path transform={tf(0)} d="M99 397L440 264" stroke="#c5dfb4" strokeWidth="2" vectorEffect="non-scaling-stroke" />
      <path d="M119.500 0V381" stroke="#8fd6ef" strokeWidth="0.6" />
      <path transform={tf(3)} d="M620 0L552 160M680 0L692 45" stroke="#a5dcf0" strokeWidth="1.2" fill="none" vectorEffect="non-scaling-stroke" />
      <path transform={tf(3)} d="M145 835L270 740V705" stroke="#5aa9dd" strokeWidth="1" strokeDasharray="3 2" fill="none" vectorEffect="non-scaling-stroke" />

      <Line items={MINOR} color="#f8f6f3" w={1.3} />
      <Line items={ROADS} color="#dcdde8" w={3.6} />
      <Line items={ROADS} color="#ffffff" w={2.3} />
      <Line items={MAJOR} color="#d9dbe7" w={5.8} />
      <Line items={MAJOR} color="#ffffff" w={4.4} />
      <Line items={RAMPS} color="#ffb784" w={1} />
      <Line items={YELLOW} color="#f4d163" w={4} cap="butt" />
      <Line items={ORANGE} color="#ffa35f" w={4.2} cap="butt" />

      {LABELS.map(([t, text, x, y, len, rot, k], i) => {
        const s = KIND[k];
        return (
          <text
            key={i}
            transform={`translate(${px(t, x)} ${y / 3}) rotate(${rot}) scale(${s.squeeze} 1)`}
            y={s.size * 0.36}
            textAnchor="middle"
            textLength={len / s.squeeze}
            lengthAdjust={k === "d" ? "spacing" : "spacingAndGlyphs"}
            fontSize={s.size}
            fontWeight={s.weight}
            fontStyle={s.italic ? "italic" : "normal"}
            fill={s.fill}
            stroke={k === "r" ? "none" : "#f5f3ef"}
            strokeOpacity={0.7}
            strokeWidth={2}
            paintOrder="stroke"
            strokeLinejoin="round"
          >
            {text}
          </text>
        );
      })}

      {SHIELDS.map(([t, x, y, n], i) => {
        const w = n.length > 2 ? 25 : 19.5;
        return (
          <g key={i} transform={`translate(${px(t, x)} ${y / 3})`}>
            <rect x={-w / 2} y={-6.5} width={w} height={13} rx={2.5} fill="#fff" stroke="#444" strokeWidth={1.2} />
            <text y={3.6} textAnchor="middle" fontSize={10} fontWeight={600} fill="#333">{n}</text>
          </g>
        );
      })}

      {/* airport symbol */}
      <g transform="translate(374 276.500)" fill="#4a5cb4">
        <path d="M-1.300 -6Q0 -9 1.300 -6V-2.500L7.500 0.800V2.300L1.300 0.800V4.500L3.500 6.200V7.300L0 6.500 -3.500 7.300V6.200L-1.300 4.500V0.800L-7.500 2.300V0.800L-1.300 -2.500Z" />
      </g>
      {/* park tree */}
      <g transform="translate(325 106)" fill="#2c8a10">
        <ellipse cx="0" cy="-1" rx="5.800" ry="4" />
        <path d="M-0.900 1H0.900V5H2.500V6H-2.500V5H-0.900Z" />
      </g>
      {/* golfers */}
      {[
        [338.5, 22],
        [438.5, 59],
        [1136, 126],
      ].map(([x, y]) => (
        <g key={x} transform={`translate(${x} ${y})`} stroke="#2f7d1b" strokeWidth="1.300" fill="none" strokeLinecap="round">
          <circle cx="0.300" cy="-3.500" r="0.900" fill="#2f7d1b" stroke="none" />
          <path d="M-2.600 -5L-1 -1.500H1.500L2.500 -4M0.300 -1.500V1L-1.500 5M0.500 1L1.800 5" />
        </g>
      ))}
      <circle cx="202.500" cy="72" r="2.200" fill="#6b5f5b" stroke="#eee" strokeWidth="0.600" />
    </svg>
  );
}

const INPUT =
  "block h-[34px] w-full rounded-[4px] border border-[#ccc] bg-white px-3 pb-px text-[14px] text-[#555] shadow-[inset_0_1px_1px_rgba(0,0,0,0.075)] outline-none placeholder:text-[#999] placeholder:opacity-100";
const FIELD_LABEL = "h-[27px] leading-[23px] font-bold tracking-[0.2px]";

const ROWS = [
  ["Metrotown", "Steve", "2020-12-03 5:30 pm"],
  ["Metrotown", "John", "2020-12-12 2:30 pm"],
  ["SFU Surrey", "Jane", "2020-12-06 1:34 pm"],
  ["SFU Surrey", "John", "2020-12-22 5:30 am"],
];

export default function App() {
  return (
    <div className="h-[1117px] w-[2467px] overflow-hidden bg-white pr-[28px] pl-[39px] font-['DejaVu_Sans_Mono','Liberation_Mono',monospace] text-[16px] leading-[23px] text-[#333]">
      <div className="w-[2400px]">
        <div className="relative">
          <StreetMap />
          <div className="absolute right-0 bottom-0 h-[17px] w-[350px] bg-white/70 pr-[5px] text-right font-['Liberation_Sans',Arial,sans-serif] text-[11px] leading-[17px] tracking-[-0.02px] whitespace-nowrap text-[#333]">
            <a className="text-[#0078a8]">Leaflet</a> | Map data © <a className="text-[#0078a8]">OpenStreetMap</a> contributors, Imagery © <a className="text-[#0078a8]">Mapbox</a>
          </div>
        </div>

        <button className="block h-[26px] w-full border-2 border-[#5f7b6c] bg-[#889b8e] text-center leading-[22px] text-white">Add new place</button>

        <div className="flex h-[46px] justify-center pt-[21px]">
          <label className="h-[22px] w-[60px] leading-[20px] font-bold tracking-[0.35px] whitespace-nowrap">Places</label>
          <div className="flex h-[25px] w-[360px] items-center justify-between border border-[#767676] bg-white pr-2 pl-1">
            <span className="-mt-0.5">SFU Surrey</span>
            <svg width="18" height="11" viewBox="0 0 18 11" fill="none" stroke="#333" strokeWidth="2">
              <path d="M1 1.500L9 9.500 17 1.500" />
            </svg>
          </div>
        </div>

        <button className="block h-[60px] w-full rounded-[5px] border border-[#4cae4c] bg-[#5cb85c] pb-[3px] text-center text-[18px] tracking-[0.8px] text-white [-webkit-text-stroke:0.3px_white]">REPORT NEW CASE</button>

        <form className="mx-auto flex w-[1516px] flex-col pt-[19px]">
          <label className={FIELD_LABEL}>Name:</label>
          <input className={INPUT} placeholder="Enter the name of the placeName being reported." />
          <div className="mb-[38px] flex h-[52px] items-center rounded-[4px] border border-[#ebccd1] bg-[#f2dede] px-[15px] pb-0.5 text-[#a94442]">The name of the place being reported is requiured.</div>
          <label className={FIELD_LABEL}>Latitude:</label>
          <input className={INPUT} placeholder="Enter the latitude of the place you want to add." />
          <div className="flex flex-col pt-[18px]">
            <label className={FIELD_LABEL}>Longitude:</label>
            <input className={INPUT} placeholder="Enter the Longitude of the place you want to add." />
          </div>
          <button type="button" className="mt-5 mb-[21px] h-[34px] w-[77px] rounded-[4px] border border-[#4cae4c] bg-[#5cb85c] pb-0.5 text-[14px] font-bold text-white opacity-65">SUBMIT</button>
        </form>

        <table className="w-[2400px] table-fixed border-separate border-spacing-0 text-center">
          <colgroup>
            <col className="w-[404px]" />
            <col className="w-[531px]" />
            <col className="w-[713px]" />
            <col className="w-[324px]" />
            <col className="w-[428px]" />
          </colgroup>
          <thead>
            <tr className="h-[30px] bg-[#889b8e] tracking-[0.3px] text-white">
              <th className="border-t border-l border-[#006400] p-0 pb-0.5">Where</th>
              <th className="border-t border-[#006400] p-0 pb-0.5">Person Reported</th>
              <th className="border-t border-[#006400] p-0 pb-0.5">Date of Visit</th>
              <th className="border-t border-[#006400] p-0" />
              <th className="border-t border-r border-[#006400] p-0" />
            </tr>
          </thead>
          <tbody>
            {ROWS.map((r, i) => (
              <tr key={i} className="h-[45px]">
                {r.map((c, j) => (
                  <td key={j} className="border-t border-l border-[#ddd] p-0 pt-[7px] align-top">{c}</td>
                ))}
                <td className="border-t border-l border-[#ddd] p-0 px-2 pt-2 align-top">
                  <button className="block h-[28px] w-full border-2 border-[#ff0000] bg-[#efefef] leading-[24px] text-black">REMOVE</button>
                </td>
                <td className="border-x border-t border-[#ddd] p-0 px-2 pt-2 align-top">
                  <button className="block h-[28px] w-full border-2 border-[#1e7b1e] bg-[#efefef] leading-[24px] text-black">MORE INFO</button>
                </td>
              </tr>
            ))}
            <tr className="h-[45px]">
              {[0, 1, 2, 3].map((j) => (
                <td key={j} className="border-t border-l border-[#ddd] p-0" />
              ))}
              <td className="border-x border-t border-[#ddd] p-0" />
            </tr>
          </tbody>
        </table>
      </div>
    </div>
  );
}
